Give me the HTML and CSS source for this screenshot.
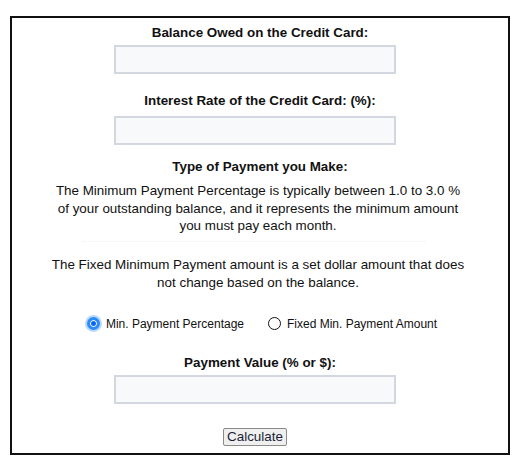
FILE: index.html
```html
<!DOCTYPE html>
<html lang="en">
<head>
    <meta charset="UTF-8">
    <meta name="viewport" content="width=device-width, initial-scale=1.0">
    <title>Credit Card Payoff Calculator</title>
    <link rel="stylesheet" href="styles.css">
</head>
<body>
    <div class="calculator">
        <label class="field-label" for="balance">Balance Owed on the Credit Card:</label>
        <input class="field" type="text" id="balance">

        <label class="field-label second" for="rate">Interest Rate of the Credit Card: (%):</label>
        <input class="field" type="text" id="rate">

        <h3 class="type-heading">Type of Payment you Make:</h3>
        <p class="note">The Minimum Payment Percentage is typically between 1.0 to 3.0 % of your outstanding balance, and it represents the minimum amount you must pay each month.</p>
        <div class="divider"></div>
        <p class="note fixed">The Fixed Minimum Payment amount is a set dollar amount that does not change based on the balance.</p>

        <div class="options">
            <label class="option"><input type="radio" name="ptype" value="percent" checked> Min. Payment Percentage</label>
            <label class="option"><input type="radio" name="ptype" value="fixed"> Fixed Min. Payment Amount</label>
        </div>

        <label class="field-label value" for="payment">Payment Value (% or $):</label>
        <input class="field" type="text" id="payment">

        <button class="calc-btn" type="button">Calculate</button>
    </div>
</body>
</html>
```

FILE: styles.css
```css
body {
    margin: 0;
    padding: 16px 10px;
    font-family: "Liberation Sans", Arial, sans-serif;
    color: #111;
    background-color: #fff;
}
.calculator {
    width: 500px;
    box-sizing: border-box;
    border: 2px solid #111;
    display: flex;
    flex-direction: column;
    align-items: center;
    padding: 6px 0 7px;
}
.field-label {
    font-weight: bold;
    font-size: 13.4px;
    line-height: 18px;
    margin-bottom: 3px;
}
.field-label.second {
    margin-top: 18px;
    margin-bottom: 6px;
}
.field-label.value {
    margin-top: 23px;
}
.field {
    width: 282px;
    height: 29px;
    box-sizing: border-box;
    border: 2px solid #d3d8e0;
    background-color: #f8f9fb;
    margin: 0 10px 0 0;
}
.type-heading {
    font-size: 13.4px;
    line-height: 18px;
    margin: 13px 0 6px;
}
.note {
    font-size: 13.4px;
    line-height: 17.7px;
    text-align: center;
    width: 414px;
    margin: 0 4px 0 0;
}
.divider {
    width: 343px;
    margin: 6px 0 0 -14px;
    border-top: 1px dotted #eeeeee;
}
.note.fixed {
    margin-top: 14px;
}
.options {
    display: flex;
    gap: 24px;
    margin-top: 25px;
    margin-left: 4px;
    font-size: 12px;
}
.option {
    display: flex;
    align-items: center;
    gap: 6px;
}
.option input {
    appearance: none;
    width: 13px;
    height: 13px;
    margin: 0;
    border-radius: 50%;
    border: 1.5px solid #111;
    background: #fff;
}
.option input:checked {
    border: 3px solid #2c8cf7;
    box-shadow: 0 0 0 2px #b9d8fb, inset 0 0 0 1px #fff;
    background-color: #0a66f0;
}
.calc-btn {
    margin: 24px 10px 0 0;
    width: 64px;
    height: 18px;
    padding: 0;
    font-family: "Liberation Sans", Arial, sans-serif;
    font-size: 13.4px;
    line-height: 14px;
    color: #1a1f36;
    background-color: #efefef;
    border: 1px solid #8a8a8a;
    border-radius: 2px;
}
```
